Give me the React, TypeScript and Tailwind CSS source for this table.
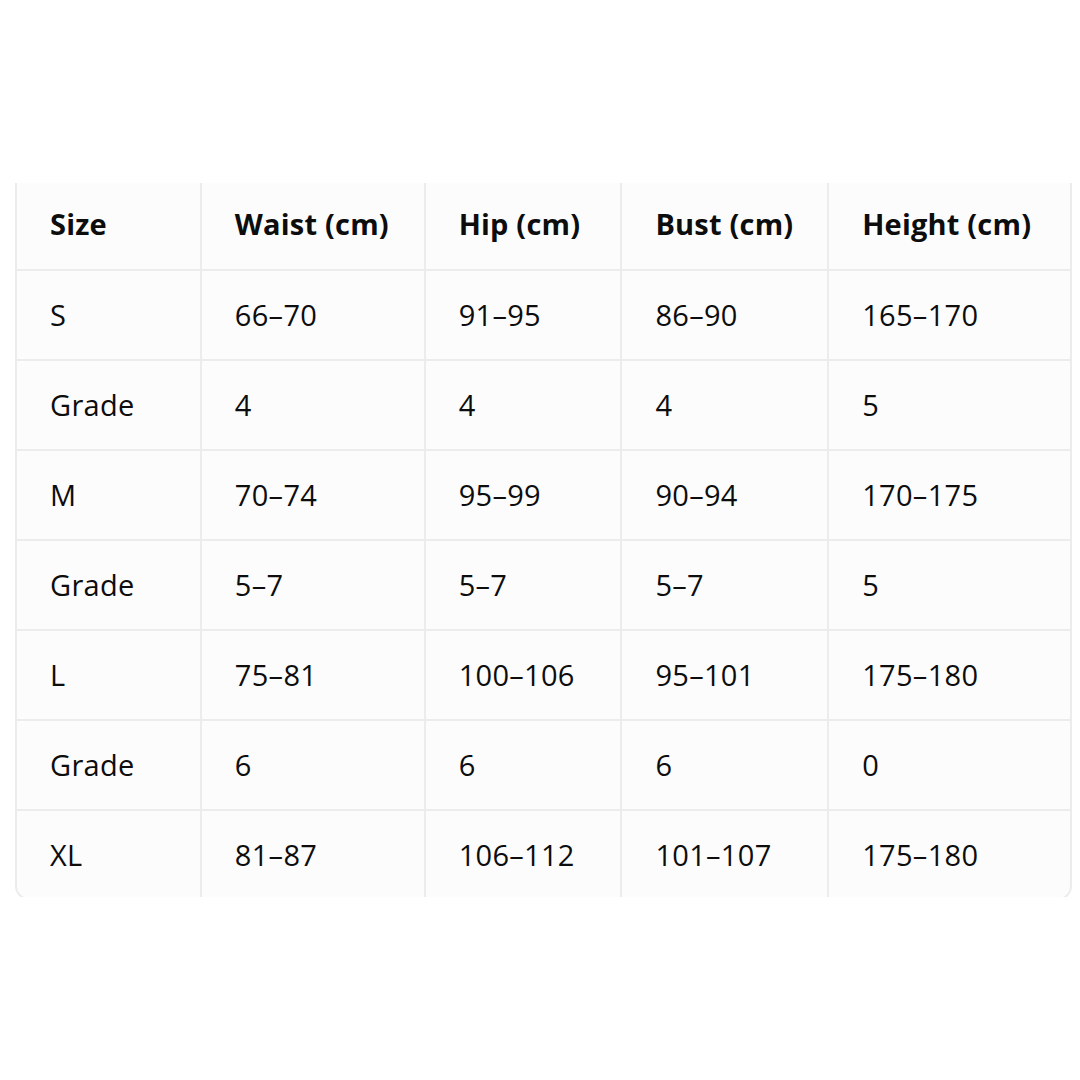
const headers = ["Size", "Waist (cm)", "Hip (cm)", "Bust (cm)", "Height (cm)"];

const rows = [
  ["S", "66–70", "91–95", "86–90", "165–170"],
  ["Grade", "4", "4", "4", "5"],
  ["M", "70–74", "95–99", "90–94", "170–175"],
  ["Grade", "5–7", "5–7", "5–7", "5"],
  ["L", "75–81", "100–106", "95–101", "175–180"],
  ["Grade", "6", "6", "6", "0"],
  ["XL", "81–87", "106–112", "101–107", "175–180"],
];

const widths = ["w-[184px]", "w-[224px]", "w-[197px]", "w-[207px]", "w-[242px]"];

export default function App() {
  return (
    <div
      className="w-[1080px] h-[1080px] bg-white pt-[183px] pl-[15px]"
      style={{ fontFamily: '"Open Sans", "Noto Sans", sans-serif' }}
    >
      <div className="w-[1057px] h-[714px] overflow-hidden">
        <div className="h-[717px] border-x-2 border-b-2 border-[#ececec] rounded-b-[14px] bg-[#fcfcfc] overflow-hidden">
          <table className="table-fixed border-collapse text-[#0d0d0d]">
            <thead>
              <tr className="h-[87px] border-b-2 border-[#ececec]">
                {headers.map((h, i) => (
                  <th
                    key={h}
                    className={`${widths[i]} text-left font-bold text-[29px] tracking-[0.2px] pl-[33px] pb-[4px] ${
                      i < 4 ? "border-r-2 border-[#ececec]" : ""
                    }`}
                  >
                    {h}
                  </th>
                ))}
              </tr>
            </thead>
            <tbody>
              {rows.map((r, ri) => (
                <tr key={ri} className="h-[90px] border-b-2 border-[#ececec]">
                  {r.map((c, i) => (
                    <td
                      key={i}
                      className={`text-[29px] tracking-[0.3px] pl-[33px] ${
                        i < 4 ? "border-r-2 border-[#ececec]" : ""
                      }`}
                    >
                      {c}
                    </td>
                  ))}
                </tr>
              ))}
            </tbody>
          </table>
        </div>
      </div>
    </div>
  );
}
